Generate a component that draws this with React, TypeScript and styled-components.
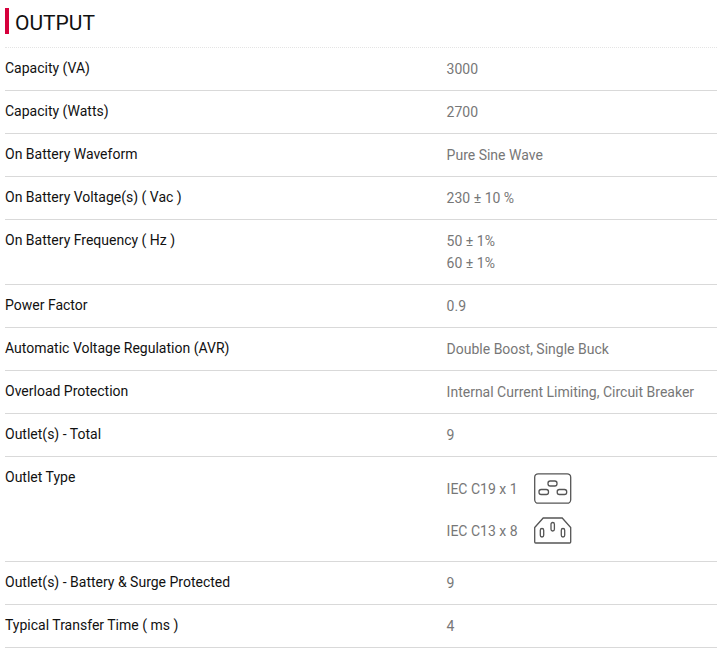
import { createGlobalStyle } from "styled-components";
import styled from "styled-components";
import React from "react";

const GlobalStyle = createGlobalStyle`
  html, body {
    margin: 0;
    padding: 0;
    background: #fff;
    font-family: Roboto, "Liberation Sans", sans-serif;
  }
`;

function C19Icon() {
  return (
    <svg width="38" height="31" viewBox="0 0 38 31" fill="none" stroke="#555" strokeWidth="1.3">
      <rect x="0.7" y="0.8" width="36" height="29.4" rx="3.5" />
      <rect x="14" y="8" width="9" height="5" rx="2.2" />
      <rect x="5" y="16.5" width="9.5" height="5" rx="2.2" />
      <rect x="23.2" y="16.5" width="9.5" height="5" rx="2.2" />
    </svg>
  );
}

function C13Icon() {
  return (
    <svg width="38" height="27" viewBox="0 0 38 27" fill="none" stroke="#555" strokeWidth="1.3">
      <path d="M0.7 10.5 L9.2 1 H28.2 L36.7 10.5 V25 a1 1 0 0 1 -1 1 H1.7 a1 1 0 0 1 -1 -1 Z" />
      <rect x="6.3" y="11.5" width="3.4" height="8.5" rx="1.7" />
      <rect x="17" y="5.5" width="3.4" height="8.5" rx="1.7" />
      <rect x="27.3" y="11.5" width="3.4" height="8.5" rx="1.7" />
    </svg>
  );
}

const rows: { label: string; values: string[] }[] = [
  { label: "Capacity (VA)", values: ["3000"] },
  { label: "Capacity (Watts)", values: ["2700"] },
  { label: "On Battery Waveform", values: ["Pure Sine Wave"] },
  { label: "On Battery Voltage(s) ( Vac )", values: ["230 ± 10 %"] },
  { label: "On Battery Frequency ( Hz )", values: ["50 ± 1%", "60 ± 1%"] },
  { label: "Power Factor", values: ["0.9"] },
  { label: "Automatic Voltage Regulation (AVR)", values: ["Double Boost, Single Buck"] },
  { label: "Overload Protection", values: ["Internal Current Limiting, Circuit Breaker"] },
  { label: "Outlet(s) - Total", values: ["9"] },
];

const rowsAfter: { label: string; values: string[] }[] = [
  { label: "Outlet(s) - Battery & Surge Protected", values: ["9"] },
  { label: "Typical Transfer Time ( ms )", values: ["4"] },
];

export default function App() {
  const renderRow = (r: { label: string; values: string[] }) => (
    <Row key={r.label}>
      <Label>{r.label}</Label>
      <Value>
        {r.values.map((v) => (
          <ValueLine key={v}>{v}</ValueLine>
        ))}
      </Value>
    </Row>
  );

  return (
    <>
      <GlobalStyle />
      <Wrap>
        <Header>
          <Title>OUTPUT</Title>
        </Header>
        {rows.map(renderRow)}
        <Row>
          <Label>Outlet Type</Label>
          <OutletList>
            <Outlet>
              <OutletName>IEC C19 x 1</OutletName>
              <C19Icon />
            </Outlet>
            <Outlet>
              <OutletName>IEC C13 x 8</OutletName>
              <C13Icon />
            </Outlet>
          </OutletList>
        </Row>
        {rowsAfter.map(renderRow)}
      </Wrap>
    </>
  );
}

const Wrap = styled.div`
  width: 717px;
  padding: 0 0 0 5px;
  box-sizing: border-box;
`;

const Header = styled.div`
  padding-top: 8px;
  height: 39px;
  border-bottom: 1px dotted #e4e4e4;
`;

const Title = styled.h2`
  margin: 0;
  height: 26px;
  border-left: 4px solid #d6003c;
  padding-left: 6px;
  font-size: 21px;
  font-weight: 400;
  line-height: 30px;
  color: #111;
`;

const Row = styled.div`
  display: grid;
  grid-template-columns: 441.6px 1fr;
  padding: 10px 0 9px;
  border-bottom: 1px solid #d9d9d9;
`;

const Label = styled.div`
  font-size: 14px;
  line-height: 20px;
  color: #111;
`;

const Value = styled.div`
  font-size: 14px;
  color: #777;
`;

const ValueLine = styled.div`
  line-height: 23px;
  height: 23px;
  margin-bottom: -1px;
  &:last-child {
    margin-bottom: 0;
  }
`;

const OutletList = styled.div`
  display: flex;
  flex-direction: column;
  gap: 11px;
  padding: 6px 0;
`;

const Outlet = styled.div`
  display: flex;
  align-items: center;
  height: 31px;
  font-size: 14px;
  color: #777;
`;

const OutletName = styled.span`
  width: 87.4px;
`;
